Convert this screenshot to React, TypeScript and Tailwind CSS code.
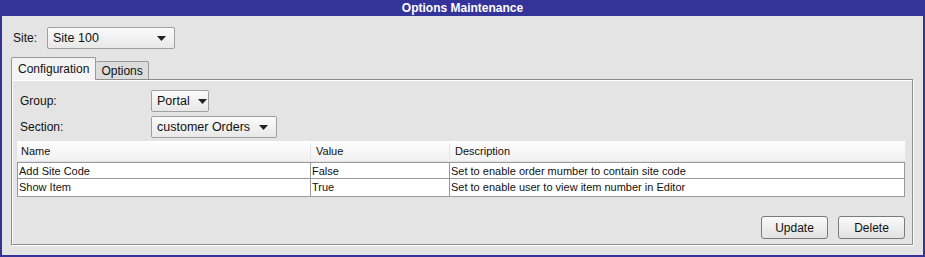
const font = { fontFamily: '"Liberation Sans", Arial, sans-serif' };

function Caret() {
  return (
    <svg width="9" height="5" viewBox="0 0 9 5" className="shrink-0">
      <path d="M0 0h9L4.5 5z" fill="#222" />
    </svg>
  );
}

function Select({ value, width }: { value: string; width: string }) {
  return (
    <div
      className={`flex h-[22px] ${width} items-center justify-between gap-[8px] rounded-[2px] border border-[#a0a0a0] bg-gradient-to-b from-[#fbfbfb] to-[#e8e8e8] pl-[5px] pr-[8px] text-[12.5px] text-[#111]`}
    >
      <span>{value}</span>
      <Caret />
    </div>
  );
}

function Button({ label }: { label: string }) {
  return (
    <button className="flex h-[23px] w-[67px] items-center justify-center rounded-[3px] border border-[#7a7a7a] bg-gradient-to-b from-[#fafafa] to-[#e2e2e2] text-[12px] text-[#111]">
      {label}
    </button>
  );
}

const rows = [
  {
    name: "Add Site Code",
    value: "False",
    description: "Set to enable order mumber to contain site code",
  },
  {
    name: "Show Item",
    value: "True",
    description: "Set to enable user to view item number in Editor",
  },
];

export default function App() {
  return (
    <div
      className="flex h-[257px] w-[925px] flex-col bg-[#333399]"
      style={font}
    >
      <div className="flex h-[16px] items-center justify-center text-[12px] font-bold leading-none text-white">
        Options Maintenance
      </div>
      <div className="mx-[2px] mb-[2px] flex flex-1 flex-col bg-[#e4e4e4] px-[9px]">
        <div className="mt-[11px] flex items-center">
          <span className="ml-[2px] w-[34px] text-[12px] text-[#111]">Site:</span>
          <Select value="Site 100" width="w-[128px]" />
        </div>

        <div className="mt-[8px] flex items-end">
          <div className="relative z-10 mb-[-1px] flex h-[23px] items-center rounded-t-[2px] border border-b-0 border-[#999] bg-[#f4f4f4] px-[6px] text-[12px] text-[#111]">
            Configuration
          </div>
          <div className="flex h-[18px] items-center rounded-t-[2px] border border-b-0 border-l-0 border-[#999] bg-[#dcdcdc] px-[5px] text-[12px] text-[#111]">
            Options
          </div>
        </div>

        <div className="mr-[1px] flex h-[166px] flex-col border border-[#8c8c8c] shadow-[inset_1px_1px_0_#fff,1px_1px_0_#fff]">
          <div className="mt-[10px] flex items-center pl-[8px]">
            <span className="w-[131px] text-[12px] text-[#111]">Group:</span>
            <Select value="Portal" width="w-[58px]" />
          </div>
          <div className="mt-[4px] flex items-center pl-[8px]">
            <span className="w-[131px] text-[12px] text-[#111]">Section:</span>
            <Select value="customer Orders" width="w-[126px]" />
          </div>

          <div className="mt-[3px] ml-[5px] mr-[7px] text-[11px] text-[#111]">
            <div className="grid h-[21px] grid-cols-[293px_139px_1fr] items-center bg-gradient-to-b from-white to-[#f0f0f0] shadow-[inset_0_-1px_0_#e2e2e2]">
              <span className="pl-[4px]">Name</span>
              <span className="border-l border-[#e6e6e6] pl-[5px]">Value</span>
              <span className="border-l border-[#e6e6e6] pl-[5px]">Description</span>
            </div>
            <div className="border-x border-b border-[#9a9a9a]">
              {rows.map((row, i) => (
                <div
                  key={row.name}
                  className={`grid h-[17px] grid-cols-[292px_139px_1fr] items-center bg-white ${
                    i === 0 ? "border-y" : "border-b-0"
                  } border-[#9a9a9a]`}
                >
                  <span className="pl-[1px]">{row.name}</span>
                  <span className="h-full border-l border-[#9a9a9a] pl-[1px] leading-[16px]">
                    {row.value}
                  </span>
                  <span className="h-full border-l border-[#9a9a9a] pl-[1px] leading-[16px]">
                    {row.description}
                  </span>
                </div>
              ))}
            </div>
          </div>

          <div className="mt-auto mb-[5px] mr-[7px] flex justify-end gap-[10px]">
            <Button label="Update" />
            <Button label="Delete" />
          </div>
        </div>
      </div>
    </div>
  );
}
